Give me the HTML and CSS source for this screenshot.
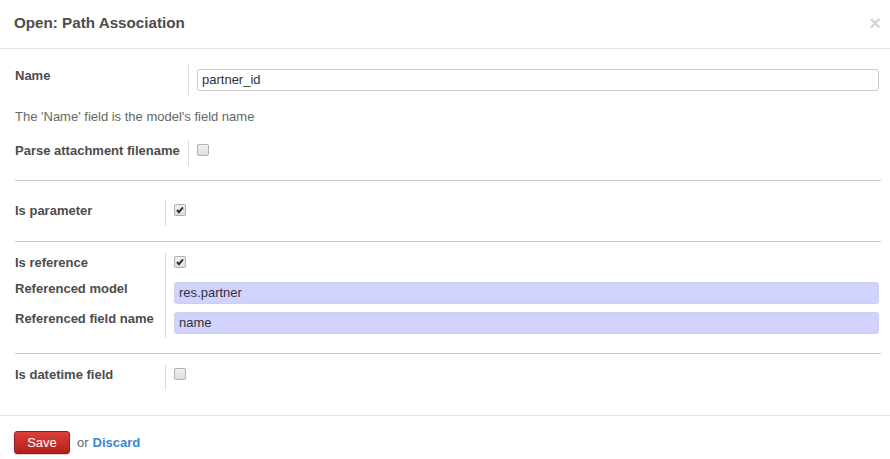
FILE: index.html
```html
<!DOCTYPE html>
<html>
<head>
<meta charset="utf-8">
<link rel="stylesheet" href="styles.css">
</head>
<body>
<div class="modal">
  <div class="modal-header">
    <h3 class="title">Open: Path Association</h3>
    <span class="close">×</span>
  </div>
  <div class="modal-body">
    <div class="group g-wide">
      <div class="row r30">
        <div class="lbl">Name</div>
        <div class="val"><div class="input">partner_id</div></div>
      </div>
    </div>
    <p class="help">The 'Name' field is the model's field name</p>
    <div class="group g-wide">
      <div class="row r26">
        <div class="lbl">Parse attachment filename</div>
        <div class="val"><span class="cb"></span></div>
      </div>
    </div>
    <hr class="sep sep-first">
    <div class="group g-narrow first">
      <div class="row r26">
        <div class="lbl">Is parameter</div>
        <div class="val"><span class="cb checked"><svg viewBox="0 0 12 12"><path d="M2.4 6 L4.7 8.6 L9.6 2.8" /></svg></span></div>
      </div>
    </div>
    <hr class="sep">
    <div class="group g-narrow">
      <div class="row r26">
        <div class="lbl">Is reference</div>
        <div class="val"><span class="cb checked"><svg viewBox="0 0 12 12"><path d="M2.4 6 L4.7 8.6 L9.6 2.8" /></svg></span></div>
      </div>
      <div class="row r30">
        <div class="lbl">Referenced model</div>
        <div class="val"><div class="input req">res.partner</div></div>
      </div>
      <div class="row r30">
        <div class="lbl">Referenced field name</div>
        <div class="val"><div class="input req">name</div></div>
      </div>
    </div>
    <hr class="sep">
    <div class="group g-narrow">
      <div class="row r26">
        <div class="lbl">Is datetime field</div>
        <div class="val"><span class="cb"></span></div>
      </div>
    </div>
  </div>
  <div class="modal-footer">
    <button class="btn-save">Save</button>
    <span class="or">or</span>
    <a class="discard">Discard</a>
  </div>
</div>
</body>
</html>
```
FILE: styles.css
```css
html, body {
  margin: 0;
  padding: 0;
  background: #fff;
}
body {
  font-family: "Liberation Sans", Arial, sans-serif;
  font-size: 13px;
  color: #4c4c4c;
}
.modal {
  width: 890px;
}
.modal-header {
  height: 49px;
  border-bottom: 1px solid #e5e5e5;
  display: flex;
  align-items: center;
  justify-content: space-between;
  padding: 0 9px 3px 14px;
  box-sizing: border-box;
}
.title {
  margin: 0;
  font-size: 15.2px;
  font-weight: bold;
  color: #4c4c4c;
}
.close {
  font-size: 20px;
  font-weight: bold;
  color: #d4d4d4;
  line-height: 20px;
}
.modal-body {
  padding: 16px 9px 25px 15px;
}
.group {
  display: flex;
  flex-direction: column;
}
.row {
  display: grid;
}
.g-wide .row {
  grid-template-columns: 173px 1fr;
}
.g-narrow .row {
  grid-template-columns: 150px 1fr;
}
.r30 { height: 30px; }
.r26 { height: 26px; }
.lbl {
  font-weight: bold;
  line-height: 18px;
  padding-top: 2px;
  white-space: nowrap;
}
.val {
  border-left: 1px solid #dcdcdc;
  padding: 4px 2px 0 8px;
}
.input {
  height: 22px;
  box-sizing: border-box;
  border: 1px solid #cccccc;
  border-radius: 3px;
  padding: 0 4px;
  line-height: 20px;
  font-size: 13px;
  color: #333;
  background: #fff;
}
.input.req {
  background: #d2d2ff;
  border-color: #cfcfe8;
}
.cb {
  display: block;
  width: 12px;
  height: 12px;
  box-sizing: border-box;
  border: 1px solid #b0b0b0;
  border-radius: 2px;
  background: linear-gradient(#f0f0f0, #dedede);
}
.cb svg {
  display: block;
  width: 10px;
  height: 10px;
}
.cb svg path {
  fill: none;
  stroke: #333;
  stroke-width: 2.4;
}
.help {
  margin: 13px 0 14px;
  line-height: 18px;
  color: #666;
}
hr.sep {
  border: 0;
  border-top: 1px solid #c8c8c8;
  margin: 15px 0 10px;
  height: 0;
}
hr.sep-first {
  margin-top: 14px;
}
.g-narrow.first {
  margin-top: 19px;
}
.modal-footer {
  border-top: 1px solid #e5e5e5;
  padding: 15px 14px;
  display: flex;
  align-items: center;
}
.btn-save {
  width: 56px;
  height: 23px;
  border: 1px solid #8f1f1b;
  border-radius: 3px;
  background: linear-gradient(#dc3f3a, #b2201c);
  color: #fff;
  font-family: "Liberation Sans", Arial, sans-serif;
  font-size: 13px;
  padding: 0;
  box-shadow: 0 1px 1px rgba(0,0,0,0.2);
}
.or {
  margin-left: 7px;
  color: #666;
}
.discard {
  margin-left: 4px;
  color: #3a87d0;
  font-weight: bold;
}
```
